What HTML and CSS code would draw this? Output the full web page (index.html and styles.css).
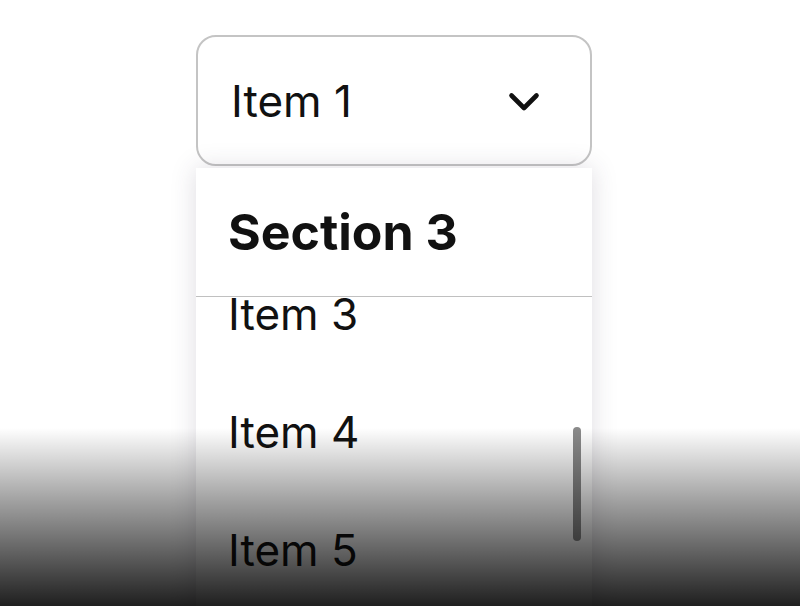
FILE: index.html
```html
<!DOCTYPE html>
<html lang="en">
  <head>
    <meta charset="UTF-8" />
    <meta name="viewport" content="width=device-width, initial-scale=1.0" />
    <title>Picker</title>
    <link rel="stylesheet" href="styles.css">
  </head>
  <body>
    <div class="picker">
      <div class="select">
        <span>Item 1</span>
        <svg class="chevron" width="34" height="22" viewBox="0 0 34 22">
          <polyline points="4.5,4.5 17,17 29.5,4.5" fill="none" stroke="#111" stroke-width="4.6" stroke-linecap="round" stroke-linejoin="round" />
        </svg>
      </div>
      <div class="menu">
        <div class="menu-head">Section 3</div>
        <div class="menu-list">
          <div class="item first">Item 3</div>
          <div class="item">Item 4</div>
          <div class="item">Item 5</div>
          <div class="thumb"></div>
        </div>
      </div>
    </div>
    <div class="fade"></div>
  </body>
</html>
```
FILE: styles.css
```css
html, body{
  margin: 0;
  height: 606px;
  overflow: hidden;
  background-color: #fff;
}
body{
  font-family: Inter, "Noto Sans", sans-serif;
  color: #111;
  position: relative;
}
/* 선택 박스 */
.picker{
  width: 396px;
  margin: 35px 0 0 196px;
}
.select{
  box-sizing: border-box;
  height: 131px;
  border: 2px solid #c4c4c4;
  border-radius: 20px;
  display: flex;
  align-items: center;
  justify-content: space-between;
  padding: 0 49px 0 33px;
  font-size: 44px;
}
.chevron{
  margin-top: 2px;
}
/* 펼쳐진 목록 */
.menu{
  margin-top: 2px;
  height: 460px;
  background-color: #fff;
  box-shadow: 0 0 24px rgba(60, 50, 80, 0.17);
  display: flex;
  flex-direction: column;
}
.menu-head{
  height: 128px;
  flex-shrink: 0;
  display: flex;
  align-items: center;
  padding-left: 32px;
  font-size: 50px;
  font-weight: 700;
  border-bottom: 1.5px solid #c0c0c0;
  position: relative;
  z-index: 1;
  background-color: #fff;
}
.menu-list{
  flex: 1;
  overflow: hidden;
  position: relative;
}
.item{
  height: 118px;
  display: flex;
  align-items: center;
  padding-left: 32px;
  font-size: 44px;
}
.item.first{
  margin-top: -42px;
}
.thumb{
  position: absolute;
  right: 11px;
  top: 130px;
  width: 8px;
  height: 114px;
  border-radius: 4px;
  background-color: #8a8a8a;
}
/* 아래쪽 어두운 그라데이션 */
.fade{
  position: absolute;
  left: 0;
  right: 0;
  bottom: 0;
  height: 178px;
  background: linear-gradient(to bottom, rgba(0, 0, 0, 0), rgba(0, 0, 0, 0.36) 40%, rgba(0, 0, 0, 0.88));
  pointer-events: none;
}
```
